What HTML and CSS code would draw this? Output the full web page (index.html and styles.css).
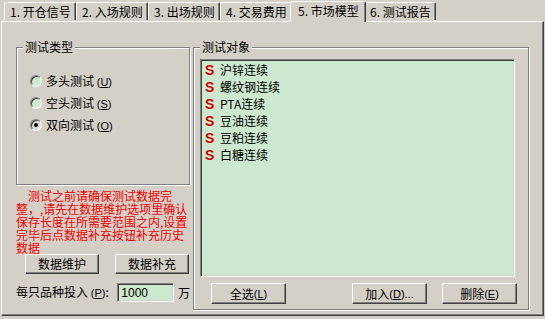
FILE: index.html
```html
<!DOCTYPE html>
<html>
<head>
<meta charset="utf-8">
<link rel="stylesheet" href="styles.css">
</head>
<body>
<div class="window">
  <div class="tabs">
    <div class="tab">1. 开仓信号</div>
    <div class="tab">2. 入场规则</div>
    <div class="tab">3. 出场规则</div>
    <div class="tab">4. 交易费用</div>
    <div class="tab active">5. 市场模型</div>
    <div class="tab">6. 测试报告</div>
  </div>
  <div class="panel">
    <div class="left">
      <div class="group type-group">
        <span class="legend">测试类型</span>
        <div class="radios">
          <div class="radio-row"><span class="radio"></span><span>多头测试 <span class="acc">(<u>U</u>)</span></span></div>
          <div class="radio-row"><span class="radio"></span><span>空头测试 <span class="acc">(<u>S</u>)</span></span></div>
          <div class="radio-row"><span class="radio checked"></span><span>双向测试 <span class="acc">(<u>O</u>)</span></span></div>
        </div>
      </div>
      <div class="warn">
        <span class="line first">测试之前请确保测试数据完</span>
        <span class="line">整，,请先在数据维护选项里确认</span>
        <span class="line">保存长度在所需要范围之内,设置</span>
        <span class="line">完毕后点数据补充按钮补充历史</span>
        <span class="line">数据</span>
      </div>
      <div class="btn-row">
        <div class="btn short">数据维护</div>
        <div class="btn short">数据补充</div>
      </div>
      <div class="invest-row">
        <span class="invest-label">每只品种投入 <span class="acc">(<u>P</u>)</span>:</span>
        <span class="input">1000</span>
        <span class="unit">万</span>
      </div>
    </div>
    <div class="group obj-group">
      <span class="legend">测试对象</span>
      <div class="list">
        <div class="item"><span class="s">S</span><span>沪锌连续</span></div>
        <div class="item"><span class="s">S</span><span>螺纹钢连续</span></div>
        <div class="item"><span class="s">S</span><span>PTA连续</span></div>
        <div class="item"><span class="s">S</span><span>豆油连续</span></div>
        <div class="item"><span class="s">S</span><span>豆粕连续</span></div>
        <div class="item"><span class="s">S</span><span>白糖连续</span></div>
      </div>
      <div class="list-btns">
        <div class="btn wide sel-all">全选 <span class="acc">(<u>L</u>)</span></div>
        <div class="btn wide add">加入 <span class="acc">(<u>D</u>)...</span></div>
        <div class="btn wide del">删除 <span class="acc">(<u>E</u>)</span></div>
      </div>
    </div>
  </div>
</div>
</body>
</html>
```

FILE: styles.css
```css
* { box-sizing: border-box; }
html, body {
  margin: 0;
  padding: 0;
  background: #d4d0c8;
}
body {
  width: 545px;
  height: 319px;
  overflow: hidden;
  font-family: "Noto Sans CJK SC", "Liberation Sans", sans-serif;
  font-size: 12px;
  line-height: 14px;
  color: #000;
}
.window {
  display: flex;
  flex-direction: column;
}
.tabs {
  display: flex;
  align-items: flex-end;
  height: 21px;
  padding-left: 4px;
}
.tab {
  width: 72px;
  height: 18px;
  margin-bottom: 1px;
  border-top: 1px solid #fff;
  border-left: 1px solid #fff;
  border-right: 1px solid #404040;
  box-shadow: inset -1px 0 0 #808080;
  border-radius: 2px 2px 0 0;
  display: flex;
  align-items: center;
  padding-left: 5px;
  padding-top: 1px;
  white-space: nowrap;
}
.tab.active {
  width: 76px;
  height: 21px;
  margin: 0 -2px -1px;
  padding-left: 7px;
  padding-top: 0;
  padding-bottom: 2px;
  background: #d4d0c8;
  position: relative;
  z-index: 2;
}
.panel {
  margin-left: 1px;
  width: 543px;
  height: 295px;
  border-top: 1px solid #fff;
  border-left: 1px solid #fff;
  border-right: 1px solid #404040;
  border-bottom: 1px solid #404040;
  box-shadow: inset -1px -1px 0 #808080;
  display: flex;
  align-items: flex-start;
  gap: 3px;
  padding: 25px 0 0 14px;
}
.left {
  width: 174px;
  display: flex;
  flex-direction: column;
}
.group {
  position: relative;
  border: 1px solid #808080;
  box-shadow: inset 1px 1px 0 #fff, 1px 1px 0 #fff;
}
.legend {
  position: absolute;
  top: -8px;
  left: 6px;
  padding: 0 2px;
  background: #d4d0c8;
  line-height: 14px;
}
.type-group {
  width: 174px;
  height: 138px;
  padding: 26px 0 0 13px;
}
.radios {
  display: flex;
  flex-direction: column;
  gap: 8px;
}
.radio-row {
  display: flex;
  align-items: center;
  gap: 4px;
  height: 14px;
}
.radio {
  width: 12px;
  height: 12px;
  border-radius: 50%;
  border: 1px solid;
  border-color: #808080 #fff #fff #808080;
  background: #cce8cf;
  box-shadow: inset 1px 1px 0 #404040;
  display: flex;
  align-items: center;
  justify-content: center;
}
.radio.checked {
  background: #d8dcd4;
}
.radio.checked::after {
  content: "";
  width: 4px;
  height: 4px;
  border-radius: 50%;
  background: #000;
}
.acc {
  font-family: "Liberation Sans", sans-serif;
  font-size: 11px;
}
.warn {
  margin: 4px 0 0;
  color: #f00000;
  display: flex;
  flex-direction: column;
}
.line {
  display: block;
  height: 13px;
  line-height: 13px;
  overflow: visible;
  white-space: nowrap;
}
.line.first {
  padding-left: 12px;
}
.btn-row {
  display: flex;
  gap: 16px;
  padding-left: 9px;
  margin-top: 0;
}
.btn {
  width: 74px;
  height: 21px;
  border-top: 1px solid #fff;
  border-left: 1px solid #fff;
  border-right: 1px solid #404040;
  border-bottom: 1px solid #404040;
  box-shadow: inset -1px -1px 0 #808080;
  display: flex;
  align-items: center;
  justify-content: center;
  white-space: nowrap;
}
.btn.short { height: 20px; }
.invest-row {
  display: flex;
  align-items: center;
  margin-top: 9px;
  height: 19px;
}
.invest-label {
  width: 102px;
}
.input {
  width: 57px;
  height: 19px;
  background: #cce8cf;
  border-top: 1px solid #808080;
  border-left: 1px solid #808080;
  border-right: 1px solid #fff;
  border-bottom: 1px solid #fff;
  box-shadow: inset 1px 1px 0 #404040, inset -1px -1px 0 #d4d0c8;
  padding: 1px 0 0 3px;
  font-family: "Liberation Sans", sans-serif;
  font-size: 12px;
  line-height: 16px;
}
.unit {
  margin-left: 4px;
}
.obj-group {
  width: 336px;
  height: 263px;
  padding: 11px 0 0 6px;
}
.list {
  width: 315px;
  height: 218px;
  background: #cce8cf;
  border-top: 1px solid #808080;
  border-left: 1px solid #808080;
  border-right: 1px solid #fff;
  border-bottom: 1px solid #fff;
  box-shadow: inset 1px 1px 0 #404040, inset -1px -1px 0 #d4d0c8;
  padding: 1px 0 0 4px;
}
.item {
  display: flex;
  align-items: center;
  height: 17px;
  gap: 6px;
}
.s {
  color: #d40000;
  font-family: "Liberation Sans", sans-serif;
  font-weight: bold;
  font-size: 14px;
  width: 9px;
}
.list-btns {
  display: flex;
  margin-top: 6px;
  padding-left: 11px;
}
.btn.wide { width: 75px; }
.btn.add { margin-left: 66px; }
.btn.del { margin-left: 15px; }
```
